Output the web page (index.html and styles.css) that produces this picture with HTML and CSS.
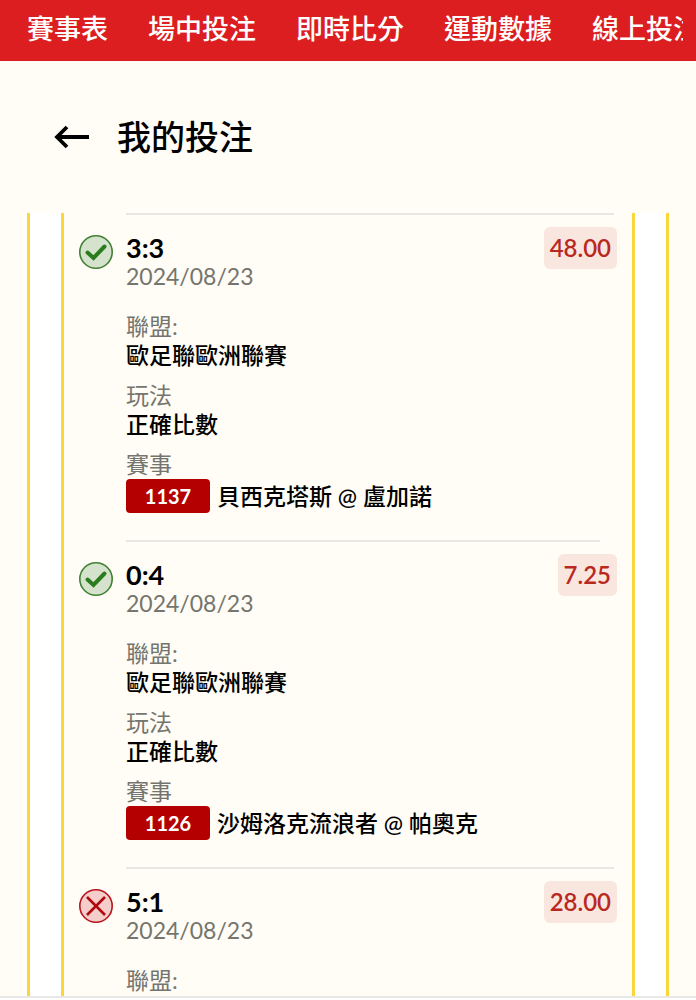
FILE: index.html
```html
<!DOCTYPE html>
<html lang="zh-Hant">
<head>
<meta charset="utf-8">
<meta name="viewport" content="width=device-width, initial-scale=1">
<title>我的投注</title>
<link rel="stylesheet" href="styles.css">
</head>
<body>
<nav class="nav">
  <div class="nav-track">
    <a href="#">賽事表</a>
    <a href="#">場中投注</a>
    <a href="#">即時比分</a>
    <a href="#">運動數據</a>
    <a href="#">線上投注</a>
  </div>
</nav>
<header class="header">
  <button class="back" type="button" aria-label="返回">
    <svg width="36" height="26" viewBox="0 0 36 26" fill="none" stroke="#000" stroke-width="3.800"><path d="M35 13H3M13 3L3 13l10 10"/></svg>
  </button>
  <h1 class="title">我的投注</h1>
</header>
<main class="viewport">
  <div class="ticket">
    <div class="bets">
      <article class="bet">
        <svg class="status" viewBox="0 0 34 34" fill="none"><circle cx="17" cy="17" r="16.200" fill="#d5e3cd" stroke="#3f8034" stroke-width="1.600"/><path d="M8.500 17.500l6 5.500L25.500 11.500" stroke="#2b7c1e" stroke-width="4" stroke-linecap="round"/></svg>
        <div class="summary">
          <h2 class="score">3:3</h2>
          <time class="date" datetime="2024-08-23">2024/08/23</time>
        </div>
        <span class="odds">48.00</span>
        <dl class="details">
          <div><dt>聯盟:</dt><dd>歐足聯歐洲聯賽</dd></div>
          <div><dt>玩法</dt><dd>正確比數</dd></div>
          <div><dt>賽事</dt><dd class="match"><span class="code">1137</span><span>貝西克塔斯 @ 盧加諾</span></dd></div>
        </dl>
      </article>
      <article class="bet bet-inset">
        <svg class="status" viewBox="0 0 34 34" fill="none"><circle cx="17" cy="17" r="16.200" fill="#d5e3cd" stroke="#3f8034" stroke-width="1.600"/><path d="M8.500 17.500l6 5.500L25.500 11.500" stroke="#2b7c1e" stroke-width="4" stroke-linecap="round"/></svg>
        <div class="summary">
          <h2 class="score">0:4</h2>
          <time class="date" datetime="2024-08-23">2024/08/23</time>
        </div>
        <span class="odds">7.25</span>
        <dl class="details">
          <div><dt>聯盟:</dt><dd>歐足聯歐洲聯賽</dd></div>
          <div><dt>玩法</dt><dd>正確比數</dd></div>
          <div><dt>賽事</dt><dd class="match"><span class="code">1126</span><span>沙姆洛克流浪者 @ 帕奧克</span></dd></div>
        </dl>
      </article>
      <article class="bet">
        <svg class="status" viewBox="0 0 34 34" fill="none"><circle cx="17" cy="17" r="16.200" fill="#f5cdca" stroke="#b8141c" stroke-width="1.600"/><path d="M8 8l18 18M26 8L8 26" stroke="#b00a10" stroke-width="2.600"/></svg>
        <div class="summary">
          <h2 class="score">5:1</h2>
          <time class="date" datetime="2024-08-23">2024/08/23</time>
        </div>
        <span class="odds">28.00</span>
        <dl class="details">
          <div><dt>聯盟:</dt></div>
        </dl>
      </article>
    </div>
  </div>
</main>
<footer class="bottom"></footer>
</body>
</html>
```
FILE: styles.css
```css
* {
  box-sizing: border-box;
  margin: 0;
  padding: 0;
}

body {
  display: flex;
  flex-direction: column;
  height: 100vh;
  overflow: hidden;
  background: #fffdf5;
  color: #000;
  font-family: Lato, "Noto Sans CJK TC", sans-serif;
  font-size: 23px;
  line-height: 29px;
}

.nav {
  flex: none;
  padding: 0 13px 0 27px;
  background: #dc1e21;
}

.nav-track {
  display: flex;
  gap: 40px;
  height: 61px;
  padding-top: 9px;
  overflow: hidden;
}

.nav-track a {
  flex: none;
  color: #fff;
  font-size: 27px;
  font-weight: 500;
  line-height: 40px;
  text-decoration: none;
  white-space: nowrap;
}

.header {
  display: flex;
  flex: none;
  align-items: center;
  gap: 27px;
  height: 152px;
  padding: 0 54px;
}

.back {
  display: flex;
  border: 0;
  background: none;
  cursor: pointer;
}

.title {
  font-size: 34px;
  font-weight: 500;
  line-height: 48px;
}

.viewport {
  flex: 1;
  min-height: 0;
  padding: 0 27px;
  overflow: hidden;
}

.ticket {
  padding: 0 31px;
  border: solid #fbd63a;
  border-width: 0 3px;
  background: #fff;
}

.bets {
  padding: 0 15px 100px;
  border: solid #fbd63a;
  border-width: 0 3px;
  background: #fffdf5;
}

.bet {
  display: grid;
  grid-template-columns: 34px 1fr auto;
  column-gap: 13px;
  align-items: start;
  padding-bottom: 27px;
}

.bet::before {
  grid-column: 2 / -1;
  height: 2px;
  margin: 0 3px 12px 0;
  background: #e8e7e1;
  content: "";
}

.bet-inset::before {
  margin-right: 17px;
}

.status {
  grid-column: 1;
  width: 34px;
  height: 34px;
  margin-top: 8px;
}

.summary {
  padding-top: 7px;
}

.score {
  font-size: 27px;
  font-weight: 700;
  line-height: 28px;
}

.date {
  display: block;
  color: #75756f;
  font-size: 23px;
  line-height: 28px;
}

.odds {
  padding: 0 6px;
  border-radius: 6px;
  background: #f9e6df;
  color: #b8281f;
  font-size: 24px;
  font-weight: 600;
  line-height: 42px;
}

.details {
  display: grid;
  grid-column: 2 / -1;
  gap: 11px;
  padding-top: 22px;
}

.details dt {
  color: #75756f;
}

.details dd {
  font-weight: 500;
}

.match {
  display: flex;
  align-items: center;
  gap: 7px;
}

.code {
  width: 84px;
  border-radius: 4px;
  background: #b40000;
  color: #fff;
  font-size: 20px;
  font-weight: 700;
  line-height: 34px;
  text-align: center;
}

.bottom {
  flex: none;
  height: 4px;
  border-top: 2px solid #e8e8e6;
  background: #fff;
}
```
